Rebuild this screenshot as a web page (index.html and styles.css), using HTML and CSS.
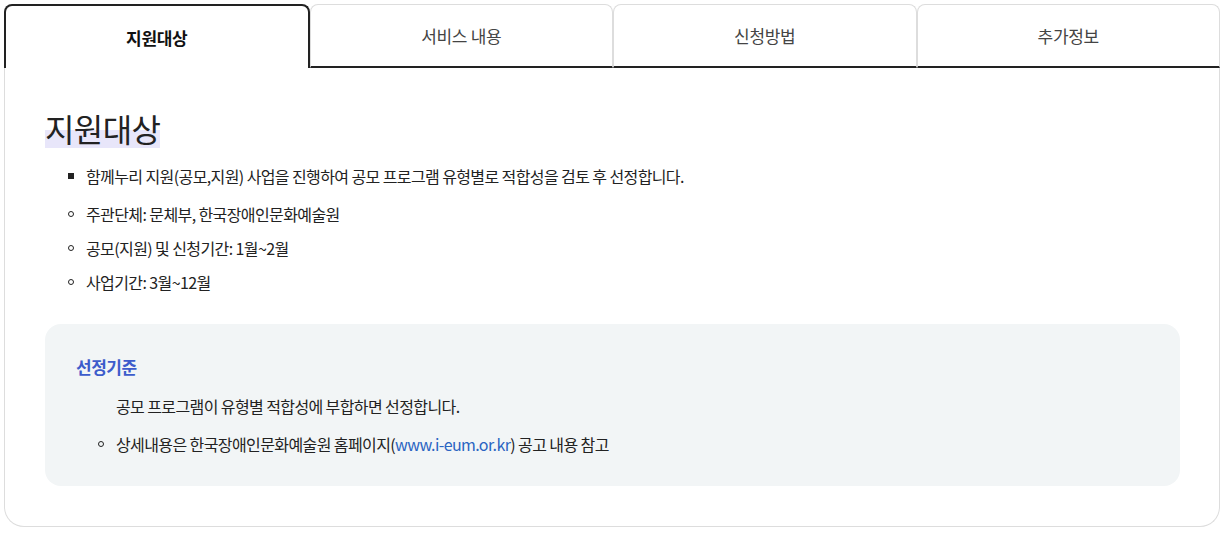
FILE: index.html
```html
<html>
<head>
<title>지원대상</title>
<link rel="stylesheet" href="styles.css">
</head>
<body>

<div class="card">
	<div class="tabs">
		<div class="tab active">지원대상</div>
		<div class="tab">서비스 내용</div>
		<div class="tab">신청방법</div>
		<div class="tab">추가정보</div>
	</div>

	<div class="panel">
		<h2 class="title"><span class="mark">지원대상</span></h2>

		<ul class="list">
			<li class="square">함께누리 지원(공모,지원) 사업을 진행하여 공모 프로그램 유형별로 적합성을 검토 후 선정합니다.</li>
			<li class="circle">주관단체: 문체부, 한국장애인문화예술원</li>
			<li class="circle">공모(지원) 및 신청기간: 1월~2월</li>
			<li class="circle">사업기간: 3월~12월</li>
		</ul>

		<div class="box">
			<h3 class="box-title">선정기준</h3>
			<p class="box-text">공모 프로그램이 유형별 적합성에 부합하면 선정합니다.</p>
			<ul class="box-list">
				<li class="circle">상세내용은 한국장애인문화예술원 홈페이지(<a href="#">www.i-eum.or.kr</a>) 공고 내용 참고</li>
			</ul>
		</div>
	</div>
</div>

</body>
</html>
```

FILE: styles.css
```css
body {
  margin: 4px;
  font-family: "Noto Sans CJK KR", "Noto Sans", sans-serif;
  color: #222;
  background: #fff;
}

.card {
  width: 1216px;
}

/* tabs */
.tabs {
  display: flex;
}
.tab {
  flex: 1;
  height: 64px;
  box-sizing: border-box;
  display: flex;
  align-items: center;
  justify-content: center;
  font-size: 17px;
  letter-spacing: -0.3px;
  color: #444;
  border: 1px solid #ddd;
  border-bottom: 2px solid #222;
  border-radius: 8px 8px 0 0;
}
.tab.active {
  border: 2px solid #222;
  border-bottom: none;
  font-weight: bold;
  color: #111;
}

/* panel */
.panel {
  border: 1px solid #ddd;
  border-top: none;
  border-radius: 0 0 20px 20px;
  padding: 40px 39px 40px 40px;
}

.title {
  margin: 0;
  font-size: 32px;
  font-weight: normal;
  letter-spacing: -0.6px;
  line-height: 40px;
}
.title .mark {
  display: inline-block;
  line-height: 40px;
  background: linear-gradient(transparent 56%, #e8e6fa 56%);
}

.list {
  list-style: none;
  margin: 16px 0 0 0;
  padding: 0 0 0 23px;
}
.list li {
  position: relative;
  padding-left: 18px;
  font-size: 16px;
  line-height: 24px;
  letter-spacing: -0.6px;
  margin-bottom: 10px;
}
.list li.square {
  margin-bottom: 14px;
}
.list li:last-child {
  margin-bottom: 0;
}

li.square::before {
  content: "";
  position: absolute;
  left: 0;
  top: 9px;
  width: 6px;
  height: 6px;
  background: #222;
}
li.circle::before {
  content: "";
  position: absolute;
  left: 0;
  top: 9px;
  width: 4px;
  height: 4px;
  border: 1px solid #222;
  border-radius: 50%;
}

/* selection box */
.box {
  margin-top: 30px;
  background: #f2f5f6;
  border-radius: 16px;
  padding: 31px 30px 30px 31px;
}
.box-title {
  margin: 0;
  font-size: 17px;
  line-height: 24px;
  font-weight: bold;
  color: #3d5ccb;
  letter-spacing: -0.5px;
}
.box-text {
  margin: 15px 0 0 0;
  padding-left: 40px;
  font-size: 16px;
  line-height: 24px;
  letter-spacing: -0.6px;
}
.box-list {
  list-style: none;
  margin: 14px 0 0 0;
  padding: 0 0 0 22px;
}
.box-list li {
  position: relative;
  padding-left: 18px;
  font-size: 16px;
  line-height: 24px;
  letter-spacing: -0.6px;
}
.box-list a {
  color: #2a64c2;
  text-decoration: none;
}
```
